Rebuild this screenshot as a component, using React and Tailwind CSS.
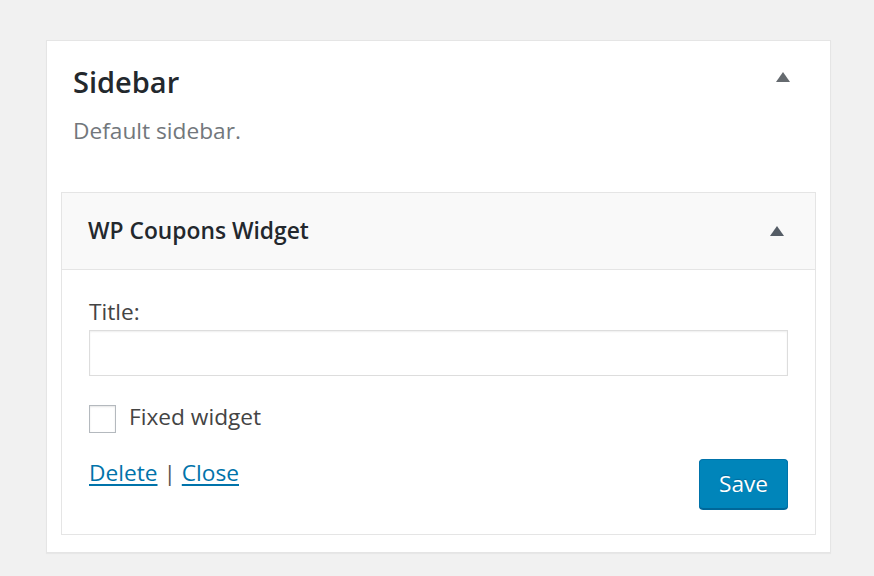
import { useState } from "react";

function Caret({ className }) {
  return (
    <svg viewBox="0 0 14 10" className={className} aria-hidden="true">
      <path d="M7 0L14 10H0z" fill="currentColor" />
    </svg>
  );
}

export default function App() {
  const [title, setTitle] = useState("");
  const [fixed, setFixed] = useState(false);

  return (
    <div
      className="min-h-screen bg-[#f1f1f1] pt-[40px] pl-[46px]"
      style={{ fontFamily: '"Open Sans", "Noto Sans", sans-serif' }}
    >
      <div className="w-[785px] bg-white border border-[#e5e5e5] shadow-[0_1px_1px_rgba(0,0,0,0.04)] px-[14px] pt-[21px] pb-[17px]">
        {/* sidebar heading */}
        <div className="flex items-start justify-between pl-[12px] pr-[26px]">
          <h2 className="text-[29px] leading-[40px] font-semibold text-[#23282d]">
            Sidebar
          </h2>
          <Caret className="w-[14px] h-[10px] mt-[10px] text-[#656a6f]" />
        </div>
        <p className="pl-[12px] mt-[14px] text-[22.7px] leading-[30px] text-[#72777c]">
          Default sidebar.
        </p>

        {/* widget */}
        <div className="mt-[46px] border border-[#e5e5e5] bg-white">
          <div className="h-[77px] flex items-center justify-between bg-[#f9f9f9] border-b border-[#e5e5e5] pl-[26px] pr-[31px]">
            <h3 className="text-[22.8px] leading-[30px] font-semibold text-[#23282d]">
              WP Coupons Widget
            </h3>
            <Caret className="w-[14px] h-[10px] text-[#555d66]" />
          </div>

          <div className="px-[27px] pt-[27px] pb-[25px] text-[#444]">
            <label className="block text-[22.7px] leading-[30px]">Title:</label>
            <input
              type="text"
              value={title}
              onChange={(e) => setTitle(e.target.value)}
              className="mt-[3px] block w-full h-[46px] border border-[#ddd] bg-white shadow-[inset_0_1px_2px_rgba(0,0,0,0.07)] px-2 text-[22px] text-[#32373c] outline-none"
            />

            <label className="mt-[29px] flex items-center gap-[13px] text-[22.7px] leading-[30px] text-[#444]">
              <input
                type="checkbox"
                checked={fixed}
                onChange={(e) => setFixed(e.target.checked)}
                className="appearance-none w-[27px] h-[28px] m-0 border border-[#b4b9be] bg-white shadow-[inset_0_1px_2px_rgba(0,0,0,0.1)]"
              />
              <span className="-mt-[4px]">Fixed widget</span>
            </label>

            <div className="mt-[25px] flex items-start justify-between">
              <div className="text-[22.7px] leading-[30px] text-[#555]">
                <a href="#" className="text-[#0073aa] underline underline-offset-[3px]">
                  Delete
                </a>{" "}
                |{" "}
                <a href="#" className="text-[#0073aa] underline underline-offset-[3px]">
                  Close
                </a>
              </div>
              <button className="mt-[1px] w-[89px] h-[50px] rounded-[4px] bg-[#0085ba] border border-[#0073aa] border-b-[#006799] shadow-[0_1px_0_#006799] text-white text-[22.7px] leading-none [text-shadow:0_-1px_1px_#006799]">
                Save
              </button>
            </div>
          </div>
        </div>
      </div>
    </div>
  );
}
